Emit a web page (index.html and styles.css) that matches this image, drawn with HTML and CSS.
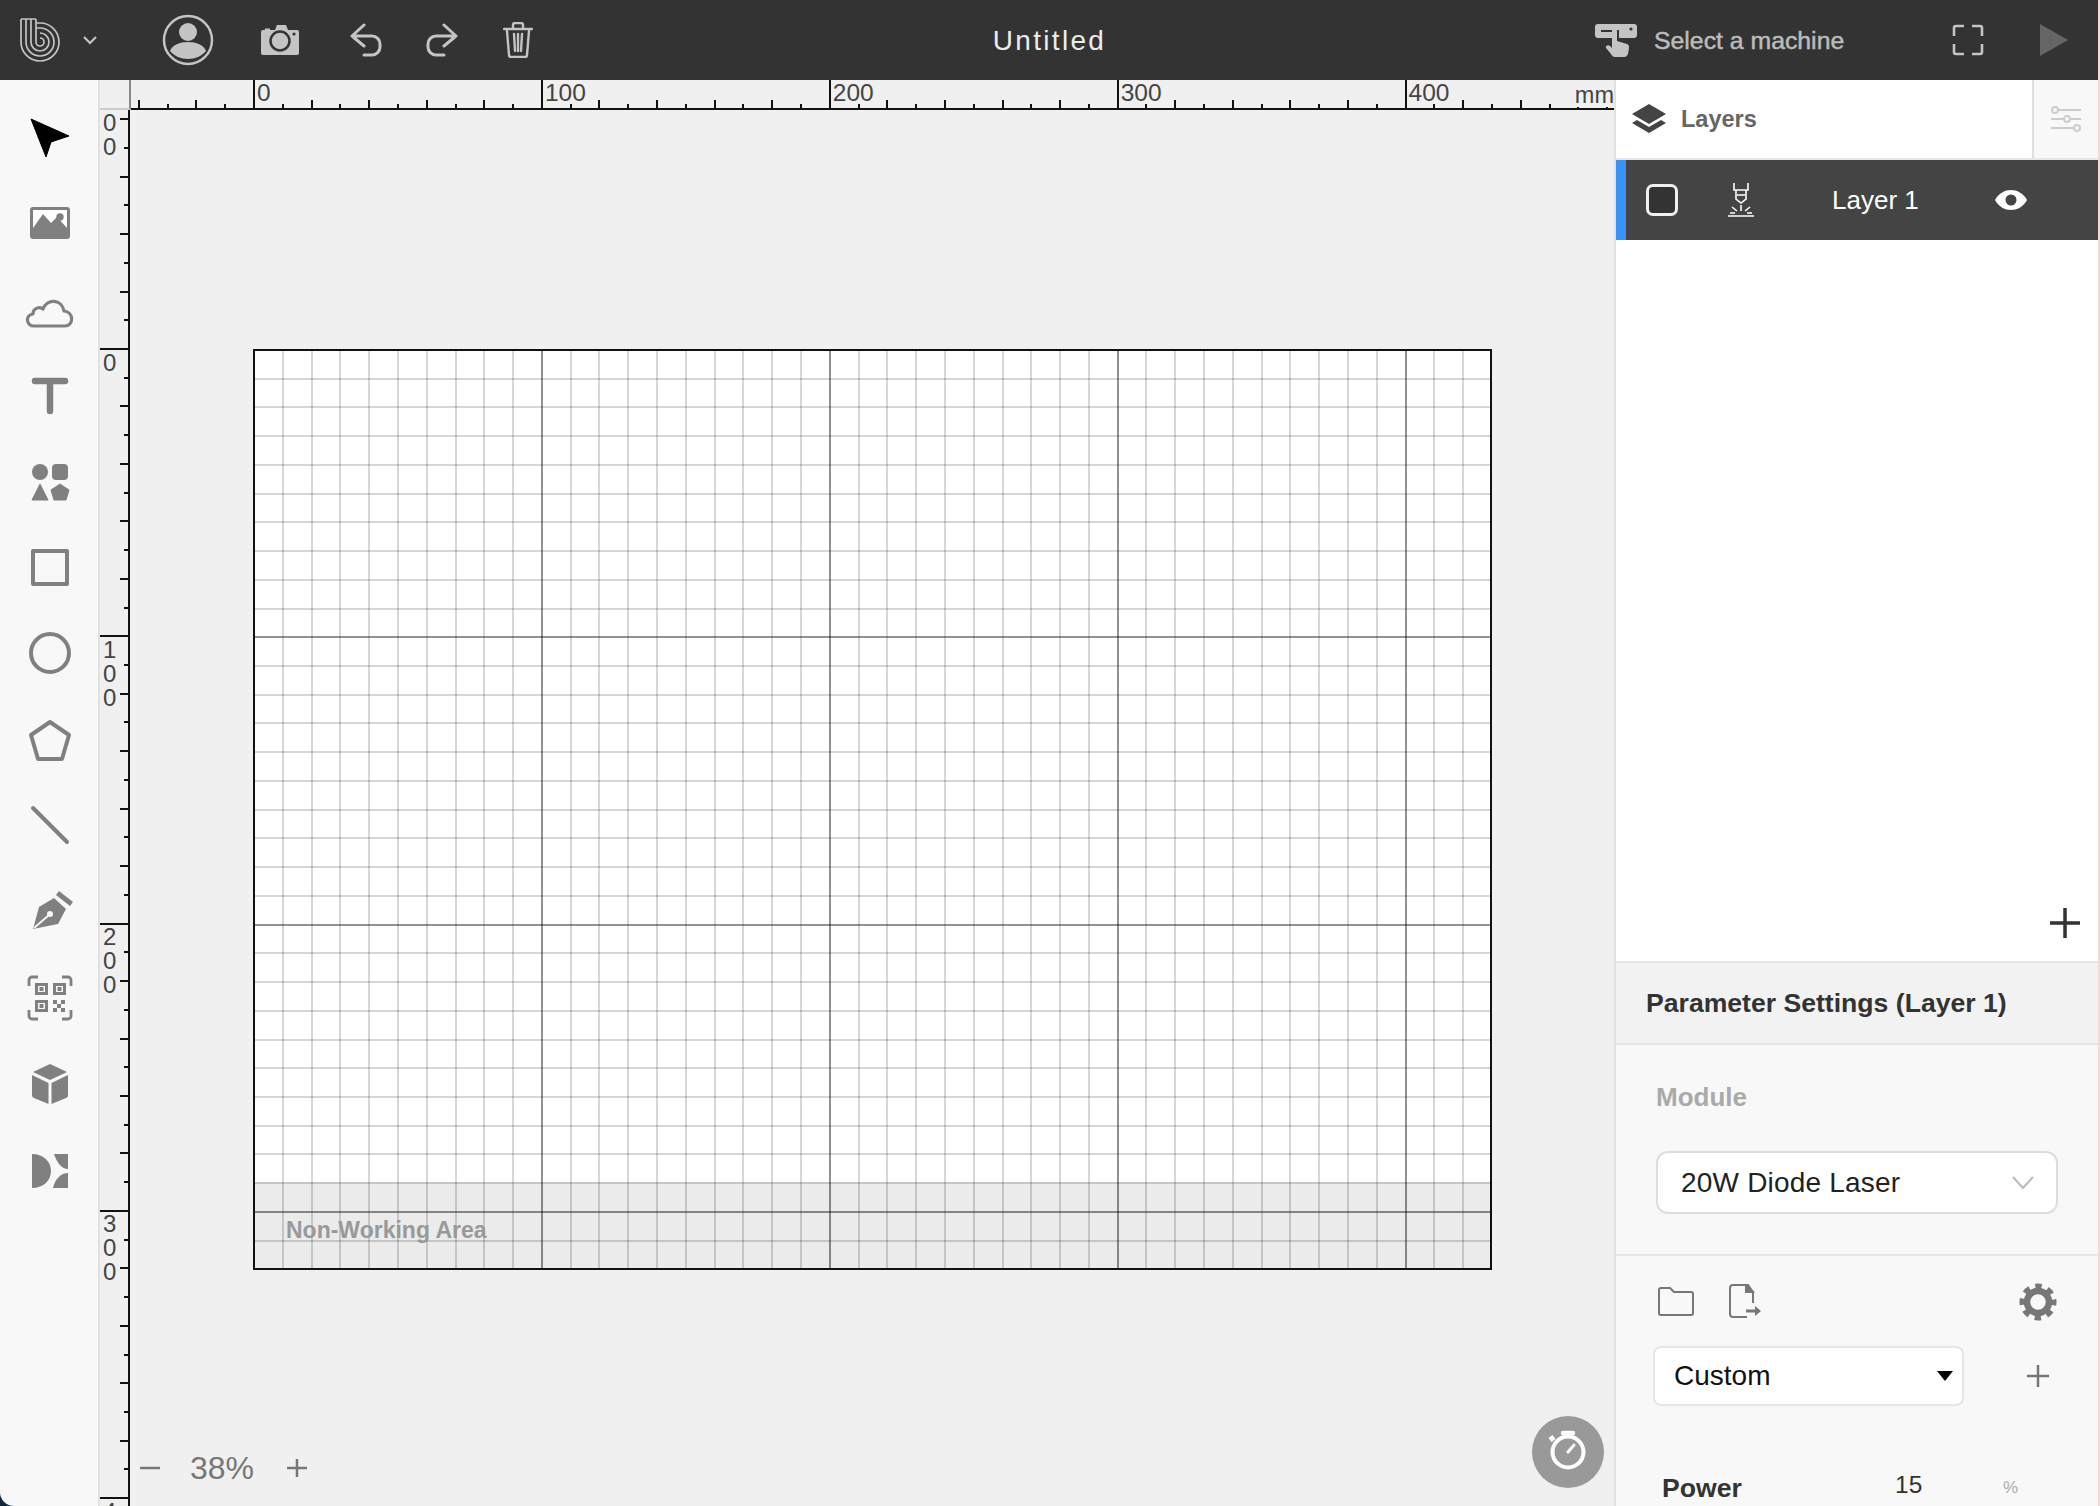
FILE: index.html
```html
<!DOCTYPE html>
<html lang="en">
    <head>
        <meta charset="UTF-8" />
        <title>Untitled</title>
        <link rel="stylesheet" href="styles.css">
    </head>
    <body>
        <div class="app">
            <header class="topbar">
                <div class="topbar-left">
                    <svg class="logo" width="44" height="48" viewBox="19 16 44 48" fill="none" stroke="#c4c4c4" stroke-width="1.7">
                        <path d="M21 19H36M21 19V42A19 19 0 1 0 40 23H36" />
                        <path d="M26 19V42A14 14 0 1 0 40 28H36" />
                        <path d="M31 19V42A9 9 0 1 0 40 33" />
                        <path d="M36 19V42A4 4 0 1 0 40 38" />
                    </svg>
                    <svg class="chevron" width="16" height="10" viewBox="0 0 16 10" fill="none" stroke="#c4c4c4" stroke-width="2.2"><path d="M2 2l6 6 6-6" /></svg>
                    <svg class="avatar" width="52" height="52" viewBox="0 0 52 52">
                        <circle cx="26" cy="26" r="24" fill="none" stroke="#c4c4c4" stroke-width="2.5" />
                        <circle cx="26" cy="18" r="9" fill="#c4c4c4" />
                        <path d="M8 37C10 31 18 28 26 28S42 31 44 37C40 42 33 45 26 45S12 42 8 37Z" fill="#c4c4c4" />
                    </svg>
                    <svg class="camera" width="38" height="30" viewBox="0 0 38 30">
                        <path d="M4 3.5h5v3H4zM14 5l2-5h9l2 5h9a2 2 0 0 1 2 2v21a2 2 0 0 1-2 2H2a2 2 0 0 1-2-2V7a2 2 0 0 1 2-2Z" fill="#c4c4c4" />
                        <circle cx="19" cy="16" r="9.5" fill="#c4c4c4" stroke="#333" stroke-width="2.5" />
                        <circle cx="33" cy="9" r="1.6" fill="#333" />
                    </svg>
                    <svg class="undo" width="32" height="34" viewBox="0 0 32 34" fill="none" stroke="#c4c4c4" stroke-width="3" stroke-linecap="round" stroke-linejoin="round">
                        <path d="M14 2L2 13l12 10M2 13h20a8 8 0 0 1 8 8v3a8 8 0 0 1-8 8h-8" />
                    </svg>
                    <svg class="redo" width="32" height="34" viewBox="0 0 32 34" fill="none" stroke="#c4c4c4" stroke-width="3" stroke-linecap="round" stroke-linejoin="round">
                        <path d="M18 2l12 11-12 10M30 13H10a8 8 0 0 0-8 8v3a8 8 0 0 0 8 8h8" />
                    </svg>
                    <svg class="trash" width="30" height="36" viewBox="0 0 30 36" fill="none" stroke="#c4c4c4" stroke-width="2.4" stroke-linecap="round">
                        <path d="M1 7h28M10 6V3a2 2 0 0 1 2-2h6a2 2 0 0 1 2 2v3M4 9l2 24a2 2 0 0 0 2 2h14a2 2 0 0 0 2-2l2-24M11 12l1 17M15 12v17M19 12l-1 17" />
                    </svg>
                </div>
                <div class="title">Untitled</div>
                <div class="topbar-right">
                    <div class="machine">
                        <svg width="42" height="33" viewBox="0 0 42 33">
                            <path d="M3 0h36a3 3 0 0 1 3 3v8a3 3 0 0 1-3 3H24V6H6v2h12v6H3a3 3 0 0 1-3-3V3a3 3 0 0 1 3-3Z" fill="#c4c4c4" />
                            <circle cx="36" cy="5" r="1.6" fill="#333" />
                            <path d="M17 7a2.5 2.5 0 0 1 5 0v10l10 3c2 1 2 2 2 4l-1 6c-1 2-2 3-4 3H20c-2 0-3-1-4-3l-5-6c-1-2 2-4 4-2l2 2Z" fill="#c4c4c4" />
                        </svg>
                        <span>Select a machine</span>
                    </div>
                    <svg class="fullscreen" width="32" height="32" viewBox="0 0 32 32" fill="none" stroke="#c4c4c4" stroke-width="2.6">
                        <path d="M12 2H4a2 2 0 0 0-2 2V12M20 2h8a2 2 0 0 1 2 2V12M12 30H4a2 2 0 0 1-2-2V20M20 30h8a2 2 0 0 0 2-2V20" />
                    </svg>
                    <svg class="play" width="28" height="32" viewBox="0 0 28 32"><path d="M0 0l28 16L0 32Z" fill="#666" /></svg>
                </div>
            </header>
            <div class="main">
                <nav class="toolbar">
                    <div class="tool">
                        <svg width="48" height="48" viewBox="0 0 48 48"><path d="M5 6L43 23 25 29 20 44Z" fill="#000" stroke="#000" stroke-linejoin="round" /></svg>
                    </div>
                    <div class="tool">
                        <svg width="48" height="48" viewBox="0 0 48 48">
                            <rect x="4" y="8" width="40" height="32" rx="3" fill="#808080" />
                            <rect x="7" y="11" width="34" height="25" fill="#fff" />
                            <path d="M7 29L17 15l8 9 6-6 10 11v8H7Z" fill="#808080" />
                            <circle cx="34" cy="18" r="3.700" fill="#808080" />
                        </svg>
                    </div>
                    <div class="tool">
                        <svg width="52" height="48" viewBox="0 0 52 48"><path d="M10 41C2 41 1 30 9 29 9 23 16 21 19 24 23 13 38 14 40 26 50 27 50 41 41 41Z" fill="none" stroke="#808080" stroke-width="3.200" stroke-linejoin="round" /></svg>
                    </div>
                    <div class="tool">
                        <svg width="48" height="48" viewBox="0 0 48 48"><path d="M9 10h30M24 10v30" fill="none" stroke="#808080" stroke-width="6.500" stroke-linecap="round" /></svg>
                    </div>
                    <div class="tool">
                        <svg width="48" height="48" viewBox="0 0 48 48" fill="#808080">
                            <circle cx="14" cy="15" r="8" />
                            <rect x="26" y="7" width="16" height="16" rx="4" />
                            <path d="M14 27l8 16H6Z" stroke="#808080" stroke-linejoin="round" />
                            <path d="M34 27l9 6-3 10H28l-3-10Z" stroke="#808080" stroke-linejoin="round" />
                        </svg>
                    </div>
                    <div class="tool">
                        <svg width="48" height="48" viewBox="0 0 48 48"><rect x="7" y="8" width="34" height="33" fill="none" stroke="#808080" stroke-width="4" stroke-linejoin="round" /></svg>
                    </div>
                    <div class="tool">
                        <svg width="48" height="48" viewBox="0 0 48 48"><circle cx="24" cy="24" r="19" fill="none" stroke="#808080" stroke-width="4" /></svg>
                    </div>
                    <div class="tool">
                        <svg width="48" height="48" viewBox="0 0 48 48"><path d="M24 7L43 20 36 44H12L5 20Z" fill="none" stroke="#808080" stroke-width="4" stroke-linejoin="round" /></svg>
                    </div>
                    <div class="tool">
                        <svg width="48" height="48" viewBox="0 0 48 48"><path d="M7 7L41 41" fill="none" stroke="#808080" stroke-width="4" stroke-linecap="round" /></svg>
                    </div>
                    <div class="tool">
                        <svg width="48" height="48" viewBox="0 0 48 48">
                            <path d="M7 42L13 20 28 11 40 22 32 37Z" fill="#808080" />
                            <path d="M33 4l14 11-3 4-14-11Z" fill="#808080" />
                            <path d="M8 41L23 28" stroke="#f8f8f8" stroke-width="1.800" />
                            <circle cx="24" cy="27" r="3" fill="#f8f8f8" />
                        </svg>
                    </div>
                    <div class="tool">
                        <svg width="48" height="48" viewBox="0 0 48 48" fill="none" stroke="#808080">
                            <path d="M3 13V7a3 3 0 0 1 3-3h6M36 4h6a3 3 0 0 1 3 3v6M3 37v6a3 3 0 0 0 3 3h6M36 46h6a3 3 0 0 0 3-3v-6" stroke-width="2.800" />
                            <path d="M10.500 11.500h10v9h-10zM28.500 11.500h10v9h-10zM10.500 28.500h10v9h-10z" stroke-width="3" />
                            <path d="M13.500 14h4v4h-4zM31.500 14h4v4h-4zM13.500 31h4v4h-4z" fill="#808080" stroke="none" />
                            <path d="M27 27h4v4h-4zM35 27h4v4h-4zM31 31h4v4h-4zM27 35h4v4h-4zM35 35h4v4h-4z" fill="#808080" stroke="none" />
                        </svg>
                    </div>
                    <div class="tool">
                        <svg width="48" height="48" viewBox="0 0 48 48" fill="#808080">
                            <path d="M24 5l17 8-17 8-17-8Z" />
                            <path d="M6 16l16.500 8v21L8 39a3 3 0 0 1-2-3Z" />
                            <path d="M42 16l-16.500 8v21L40 39a3 3 0 0 0 2-3Z" />
                        </svg>
                    </div>
                    <div class="tool">
                        <svg width="48" height="48" viewBox="0 0 48 48" fill="#808080">
                            <path d="M6 9C18 9 25 17 25 26S18 43 6 43Z" />
                            <path d="M28 9H42V24C36 24 31 18 28 9Z" />
                            <path d="M42 28V43H27C29 34 35 28 42 28Z" />
                        </svg>
                    </div>
                </nav>
                <div class="workspace">
                    <div class="ruler-top">
                        <div class="ruler-corner"></div>
                        <div class="ruler-h">
                            <span class="h-label">0</span>
                            <span class="h-label">100</span>
                            <span class="h-label">200</span>
                            <span class="h-label">300</span>
                            <span class="h-label h-label-last">400</span>
                            <span class="unit">mm</span>
                        </div>
                    </div>
                    <div class="work-row">
                        <div class="ruler-v">
                            <div class="v-label v-label-first">00</div>
                            <div class="v-label">0</div>
                            <div class="v-label">100</div>
                            <div class="v-label">200</div>
                            <div class="v-label">300</div>
                            <div class="v-label">400</div>
                        </div>
                        <div class="stage">
                            <div class="board">
                                <div class="non-working">Non-Working Area</div>
                            </div>
                            <div class="zoom-ctrl">
                                <svg width="20" height="20" viewBox="0 0 20 20"><path d="M0 10h20" stroke="#777" stroke-width="2.500" /></svg>
                                <span>38%</span>
                                <svg width="20" height="20" viewBox="0 0 20 20"><path d="M0 10h20M10 1v18" stroke="#777" stroke-width="2.500" /></svg>
                            </div>
                            <div class="timer">
                                <svg width="72" height="72" viewBox="0 0 72 72" fill="none" stroke="#fff" stroke-width="4">
                                    <circle cx="36" cy="36" r="15.500" />
                                    <path d="M31 17h10" stroke-width="4.500" stroke-linecap="round" />
                                    <path d="M18 24l4-3" stroke-width="5" />
                                    <path d="M36 36l6-7" stroke-linecap="round" stroke-width="3" />
                                </svg>
                            </div>
                        </div>
                    </div>
                </div>
                <aside class="sidebar">
                    <div class="layers-head">
                        <div class="layers-title">
                            <svg width="34" height="30" viewBox="0 0 34 30" fill="#444">
                                <path d="M17 0l17 10-17 10L0 10Z" />
                                <path d="M0 19l5-3 12 7 12-7 5 3-17 10Z" />
                            </svg>
                            <span>Layers</span>
                        </div>
                        <div class="layers-tune">
                            <svg width="30" height="26" viewBox="0 0 30 26" fill="none" stroke="#ccc" stroke-width="2">
                                <path d="M7 4h23M0 13h12M20 13h10M0 22h22" />
                                <circle cx="4" cy="4" r="3" />
                                <circle cx="16" cy="13" r="3" />
                                <circle cx="26" cy="22" r="3" />
                            </svg>
                        </div>
                    </div>
                    <div class="layer-row">
                        <div class="layer-check"></div>
                        <svg class="layer-laser" width="26" height="34" viewBox="0 0 26 34" fill="none" stroke="#fff" stroke-width="1.600">
                            <path d="M6 0v7h14V0M8 7v9l5 4 5-4V7M9 12h8M0 33h26M13 22v6M4 24l5 4M22 24l-5 4M2 30h5M24 30h-5" />
                        </svg>
                        <span class="layer-name">Layer 1</span>
                        <svg class="layer-eye" width="32" height="20" viewBox="0 0 32 20">
                            <path d="M0 10C4 3 10 0 16 0S28 3 32 10C28 17 22 20 16 20S4 17 0 10Z" fill="#fff" />
                            <circle cx="16" cy="10" r="5.500" fill="#444" />
                        </svg>
                    </div>
                    <div class="layers-space">
                        <svg width="30" height="30" viewBox="0 0 30 30"><path d="M0 15h30M15 0v30" stroke="#333" stroke-width="3.500" /></svg>
                    </div>
                    <div class="param-head">Parameter Settings (Layer 1)</div>
                    <div class="module-sec">
                        <div class="module-label">Module</div>
                        <div class="module-select">
                            <span>20W Diode Laser</span>
                            <svg width="22" height="14" viewBox="0 0 22 14" fill="none" stroke="#bbb" stroke-width="2"><path d="M1 1l10 11L21 1" /></svg>
                        </div>
                    </div>
                    <div class="preset-sec">
                        <div class="preset-icons">
                            <svg width="36" height="30" viewBox="0 0 36 30" fill="none" stroke="#777" stroke-width="2">
                                <path d="M1 26V3a2 2 0 0 1 2-2h9l4 4h17a2 2 0 0 1 2 2v19a2 2 0 0 1-2 2H3a2 2 0 0 1-2-2Z" />
                            </svg>
                            <svg class="file-icon" width="32" height="36" viewBox="0 0 32 36" fill="none" stroke="#777" stroke-width="2">
                                <path d="M24 19V8l-7-7H4a3 3 0 0 0-3 3v26a3 3 0 0 0 3 3h14" />
                                <path d="M17 1h2l5 7h-7Z" fill="#777" />
                                <path d="M17 27h10" stroke-width="3" />
                                <path d="M26 22l6 5-6 5Z" fill="#777" stroke="none" />
                            </svg>
                            <svg class="gear-icon" width="38" height="38" viewBox="0 0 38 38" fill="none" stroke="#777">
                                <circle cx="19" cy="19" r="11" stroke-width="6.500" />
                                <circle cx="19" cy="19" r="16" stroke-width="5" stroke-dasharray="6.500 6.070" stroke-dashoffset="3.250" />
                            </svg>
                        </div>
                        <div class="preset-row">
                            <div class="preset-select">
                                <span>Custom</span>
                                <svg width="16" height="10" viewBox="0 0 16 10"><path d="M0 0h16L8 10Z" fill="#000" /></svg>
                            </div>
                            <svg width="22" height="22" viewBox="0 0 22 22"><path d="M0 11h22M11 0v22" stroke="#777" stroke-width="2.500" /></svg>
                        </div>
                        <div class="power-row">
                            <span class="power-label">Power</span>
                            <span class="power-value">15</span>
                            <span class="power-unit">%</span>
                        </div>
                    </div>
                </aside>
            </div>
        </div>
    </body>
</html>
```

FILE: styles.css
```css
* {
    box-sizing: border-box;
}
html,
body {
    margin: 0;
    height: 100%;
}
body {
    background: linear-gradient(90deg, #12293d 50%, #f7d6dc 50%);
    font-family: "Liberation Sans", Arial, sans-serif;
    overflow: hidden;
}
.app {
    width: 2098px;
    height: 1506px;
    display: flex;
    flex-direction: column;
    border-bottom-left-radius: 14px;
    overflow: hidden;
}

/* top bar */
.topbar {
    height: 80px;
    flex: none;
    background: #333;
    display: flex;
    align-items: center;
    justify-content: space-between;
}
.topbar-left {
    display: flex;
    align-items: center;
    width: 560px;
    height: 80px;
}
.logo {
    margin-left: 19px;
}
.chevron {
    margin-left: 19px;
}
.avatar {
    margin-left: 64px;
}
.camera {
    margin-left: 47px;
}
.undo {
    margin-left: 51px;
}
.redo {
    margin-left: 44px;
}
.trash {
    margin-left: 45px;
}
.title {
    padding-top: 1px;
    color: #ececec;
    font-size: 28px;
    letter-spacing: 2.300px;
    margin-left: -56px;
}
.topbar-right {
    display: flex;
    align-items: center;
    width: 503px;
}
.machine {
    display: flex;
    align-items: center;
    gap: 17px;
    color: #bbb;
    font-size: 24.800px;
    -webkit-text-stroke: 0.5px #bbb;
}
.machine span {
    padding-top: 1px;
}
.fullscreen {
    margin-left: 108px;
}
.play {
    margin-left: 56px;
}

.main {
    flex: 1;
    display: flex;
    min-height: 0;
}

/* left tools */
.toolbar {
    width: 100px;
    flex: none;
    background: #f8f8f8;
    border-right: 2px solid #e0e0e0;
    padding: 14px 0 0 2px;
}
.tool {
    height: 86px;
    display: flex;
    align-items: center;
    justify-content: center;
}

/* rulers */
.workspace {
    flex: 1;
    display: flex;
    flex-direction: column;
    min-width: 0;
    background: #f0f0f0;
}
.ruler-top {
    height: 30px;
    flex: none;
    display: flex;
}
.ruler-corner {
    width: 31px;
    flex: none;
    border-right: 2px solid #888;
    border-bottom: 2px solid #ccc;
}
.ruler-h {
    flex: 1;
    position: relative;
    display: flex;
    align-items: flex-start;
    padding-left: 122px;
    border-bottom: 2px solid #111;
    background-image:
        repeating-linear-gradient(90deg, transparent 0 122px, #111 122px 124px, transparent 124px 287.900px),
        repeating-linear-gradient(90deg, transparent 0 6.840px, #111 6.840px 8.840px, transparent 8.840px 57.580px),
        repeating-linear-gradient(90deg, transparent 0 35.630px, #111 35.630px 37.630px, transparent 37.630px 57.580px);
    background-size: 100% 100%, 100% 8px, 100% 4px;
    background-position: left bottom;
    background-repeat: no-repeat;
}
.h-label {
    width: 287.900px;
    flex: none;
    padding-left: 4px;
    font-size: 24.500px;
    line-height: 25px;
    color: #444;
}
.h-label-last {
    width: 80px;
}
.unit {
    position: absolute;
    right: 0;
    top: 3px;
    font-size: 23.500px;
    line-height: 24px;
    color: #444;
    background: #f0f0f0;
}
.work-row {
    flex: 1;
    display: flex;
    min-height: 0;
}
.ruler-v {
    width: 30px;
    flex: none;
    border-right: 2px solid #111;
    overflow: hidden;
    background-image:
        repeating-linear-gradient(180deg, transparent 0 238px, #111 238px 240px, transparent 240px 287.300px),
        repeating-linear-gradient(180deg, transparent 0 8.160px, #111 8.160px 10.160px, transparent 10.160px 57.460px),
        repeating-linear-gradient(180deg, transparent 0 36.890px, #111 36.890px 38.890px, transparent 38.890px 57.460px);
    background-size: 100% 100%, 8px 100%, 4px 100%;
    background-position: right top;
    background-repeat: no-repeat;
}
.v-label {
    height: 287.300px;
    width: 14px;
    margin-left: 3px;
    padding-top: 2px;
    font-size: 24px;
    line-height: 24px;
    color: #444;
    word-break: break-all;
}
.v-label-first {
    height: 238.500px;
    padding-top: 1px;
}

/* drawing area */
.stage {
    flex: 1;
    position: relative;
    padding: 239px 0 0 123px;
    background: #f0f0f0;
}
.board {
    width: 1239px;
    height: 921px;
    display: flex;
    flex-direction: column;
    justify-content: flex-end;
    border: 2px solid #111;
    background-color: #fff;
    background-origin: border-box;
    background-image:
        repeating-linear-gradient(90deg, rgba(0, 0, 0, 0.32) 0 2px, transparent 2px 287.900px),
        repeating-linear-gradient(180deg, rgba(0, 0, 0, 0.32) 0 2px, transparent 2px 287.300px),
        repeating-linear-gradient(90deg, rgba(0, 0, 0, 0.16) 0 2px, transparent 2px 28.790px),
        repeating-linear-gradient(180deg, rgba(0, 0, 0, 0.16) 0 2px, transparent 2px 28.730px);
}
.non-working {
    height: 86px;
    padding: 35px 0 0 31px;
    background: rgba(0, 0, 0, 0.08);
    color: #999;
    font-size: 23px;
    font-weight: bold;
    line-height: 26px;
}
.zoom-ctrl {
    position: absolute;
    left: 10px;
    bottom: 21px;
    display: flex;
    align-items: center;
    gap: 31px;
    color: #777;
    font-size: 32px;
    line-height: 34px;
}
.zoom-ctrl span {
    margin: 0 2px 0 -1px;
}
.timer {
    position: absolute;
    left: 1402px;
    top: 1306px;
    width: 72px;
    height: 72px;
    border-radius: 50%;
    background: #999;
}

/* right panel */
.sidebar {
    width: 484px;
    flex: none;
    display: flex;
    flex-direction: column;
    background: #f8f8f8;
    border-left: 2px solid #e0e0e0;
}
.layers-head {
    height: 80px;
    flex: none;
    display: flex;
    background: #fff;
    border-bottom: 2px solid #e6e6e6;
}
.layers-title {
    flex: 1;
    display: flex;
    align-items: center;
    gap: 15px;
    padding-left: 16px;
    color: #666;
    font-size: 23.500px;
    font-weight: bold;
}
.layers-tune {
    width: 66px;
    display: flex;
    align-items: center;
    justify-content: center;
    background: #f8f8f8;
    border-left: 2px solid #e0e0e0;
}
.layer-row {
    height: 80px;
    flex: none;
    display: flex;
    align-items: center;
    background: #444;
    border-left: 10px solid #3a92f8;
    color: #fff;
    font-size: 26px;
}
.layer-check {
    width: 32px;
    height: 32px;
    margin-left: 20px;
    background: #333;
    border: 3px solid #f0f0f0;
    border-radius: 7px;
}
.layer-laser {
    margin-left: 50px;
}
.layer-name {
    margin-left: 78px;
}
.layer-eye {
    margin-left: 76px;
}
.layers-space {
    flex: 1;
    display: flex;
    align-items: flex-end;
    justify-content: flex-end;
    padding: 0 18px 23px 0;
    background: #fff;
}
.param-head {
    height: 84px;
    flex: none;
    display: flex;
    align-items: center;
    padding-left: 30px;
    background: #f2f2f2;
    border-top: 2px solid #e6e6e6;
    border-bottom: 2px solid #e6e6e6;
    color: #333;
    font-size: 26.600px;
    font-weight: bold;
}
.module-sec {
    height: 211px;
    flex: none;
    padding: 36px 40px 0 40px;
    border-bottom: 2px solid #e6e6e6;
}
.module-label {
    color: #aaa;
    font-size: 26px;
    font-weight: bold;
    line-height: 32px;
}
.module-select {
    height: 63px;
    margin-top: 38px;
    display: flex;
    align-items: center;
    justify-content: space-between;
    padding: 0 22px 0 23px;
    background: #fff;
    border: 2px solid #ddd;
    border-radius: 12px;
    color: #222;
    font-size: 28px;
    letter-spacing: 0.2px;
}
.preset-sec {
    height: 250px;
    flex: none;
    padding: 27px 41px 0 37px;
}
.preset-icons {
    display: flex;
    align-items: center;
    height: 38px;
}
.preset-icons svg:first-child {
    margin-left: 5px;
}
.file-icon {
    margin-left: 35px;
}
.gear-icon {
    margin-left: auto;
}
.preset-row {
    margin-top: 25px;
    display: flex;
    align-items: center;
    justify-content: space-between;
}
.preset-row > svg {
    margin-right: 8px;
}
.preset-select {
    width: 311px;
    height: 60px;
    display: flex;
    align-items: center;
    justify-content: space-between;
    padding: 0 9px 0 19px;
    background: #fff;
    border: 2px solid #e6e6e6;
    border-radius: 8px;
    color: #111;
    font-size: 28px;
}
.power-row {
    margin-top: 64px;
    display: flex;
    align-items: center;
    padding-left: 9px;
    line-height: 36px;
}
.power-label {
    width: 233px;
    color: #333;
    font-size: 26.600px;
    font-weight: bold;
}
.power-value {
    width: 108px;
    margin-top: -6px;
    color: #333;
    font-size: 24.500px;
}
.power-unit {
    color: #aaa;
    font-size: 17px;
}
```
